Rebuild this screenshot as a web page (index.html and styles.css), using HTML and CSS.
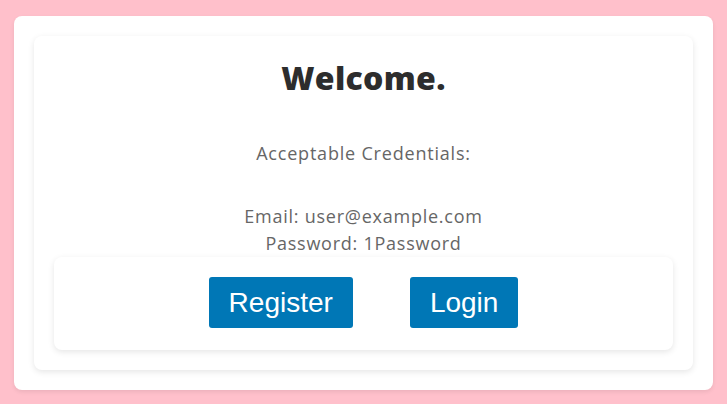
FILE: index.html
```html
<!DOCTYPE html>
<html>
<head>
<meta charset="utf-8">
<link rel="stylesheet" href="styles.css">
</head>
<body>
<div class="outer">
  <div class="card">
    <h1 class="title">Welcome.</h1>
    <p class="info">Acceptable Credentials:</p>
    <p class="creds">Email: user@example.com<br>Password: 1Password</p>
    <div class="actions">
      <button class="btn">Register</button>
      <button class="btn">Login</button>
    </div>
  </div>
</div>
</body>
</html>
```

FILE: styles.css
```css
html, body {
  margin: 0;
  padding: 0;
}
body {
  background: #ffc0cb;
  padding: 16px 14px 15px;
  font-family: "Open Sans", "DejaVu Sans", sans-serif;
}
.outer {
  background: #fff;
  border-radius: 8px;
  padding: 20px;
  box-shadow: 0 2px 4px rgba(0,0,0,0.08);
}
.card {
  background: #fff;
  border-radius: 8px;
  padding: 18px 20px 20px;
  box-shadow: 0 2px 6px rgba(0,0,0,0.1);
  text-align: center;
}
.title {
  margin: 0;
  font-size: 32px;
  line-height: 48px;
  font-weight: 800;
  letter-spacing: 0.3px;
  color: #2d2d2d;
}
.info {
  margin: 38px 0 0;
  font-size: 18px;
  line-height: 27px;
  letter-spacing: 0.8px;
  color: #666;
}
.creds {
  margin: 36px 0 0;
  font-size: 18px;
  line-height: 27px;
  letter-spacing: 0.75px;
  color: #666;
}
.actions {
  border-radius: 8px;
  box-shadow: 0 2px 6px rgba(0,0,0,0.1);
  padding: 20px 0 22px;
  display: flex;
  justify-content: center;
  gap: 57px;
}
.btn {
  background: #0077b6;
  color: #fff;
  border: none;
  border-radius: 3px;
  font-family: "Liberation Sans", Arial, sans-serif;
  font-size: 28px;
  height: 51px;
  padding: 0 20px;
}
```
